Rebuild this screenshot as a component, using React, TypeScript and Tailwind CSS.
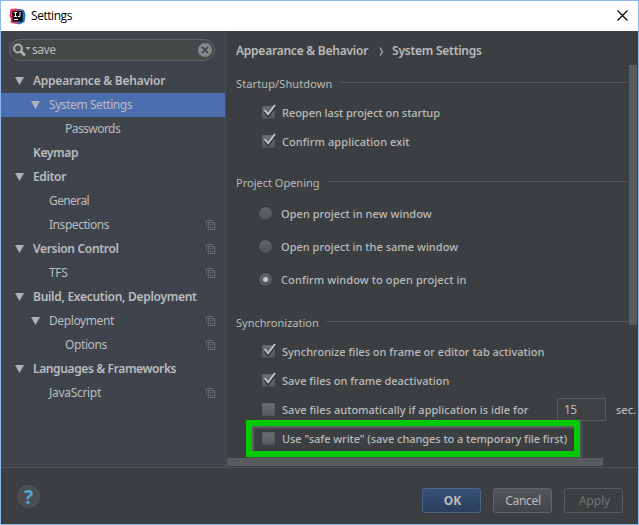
import React from "react";

const NOTO = "font-['Noto_Sans','Open_Sans',sans-serif]";

function CopyIcon() {
  return (
    <svg width="9" height="10" viewBox="0 0 9 10" fill="none" stroke="#646971" shapeRendering="crispEdges">
      <path d="M.5 7V.5H7M2.5 2.5h6v7h-6zM4 4.5h3M4 7.5h3" />
    </svg>
  );
}

type RowProps = { label: string; level: number; bold?: boolean; arrow?: boolean; copy?: boolean; selected?: boolean; tracking?: string };

const indents = ["pl-[14px]", "pl-[30px]", "pl-[46px]"];

const rows: RowProps[] = [
  { label: "Appearance & Behavior", level: 0, bold: true, arrow: true, tracking: "tracking-[-0.24px]" },
  { label: "System Settings", level: 1, arrow: true, selected: true, tracking: "tracking-[-0.43px]" },
  { label: "Passwords", level: 2, tracking: "tracking-[-0.55px]" },
  { label: "Keymap", level: 0, bold: true, tracking: "tracking-[-0.35px]" },
  { label: "Editor", level: 0, bold: true, arrow: true, tracking: "tracking-[-0.35px]" },
  { label: "General", level: 1, tracking: "tracking-[-0.6px]" },
  { label: "Inspections", level: 1, copy: true, tracking: "tracking-[-0.45px]" },
  { label: "Version Control", level: 0, bold: true, arrow: true, copy: true, tracking: "tracking-[-0.32px]" },
  { label: "TFS", level: 1, copy: true, tracking: "tracking-[-0.3px]" },
  { label: "Build, Execution, Deployment", level: 0, bold: true, arrow: true, tracking: "tracking-[-0.28px]" },
  { label: "Deployment", level: 1, arrow: true, copy: true, tracking: "tracking-[-0.4px]" },
  { label: "Options", level: 2, copy: true, tracking: "tracking-[-0.4px]" },
  { label: "Languages & Frameworks", level: 0, bold: true, arrow: true, tracking: "tracking-[-0.37px]" },
  { label: "JavaScript", level: 1, copy: true, tracking: "tracking-[-0.3px]" },
];

function TreeRow({ label, level, bold, arrow, copy, selected, tracking = "" }: RowProps) {
  return (
    <div className={`flex h-6 items-center pr-[10px] ${indents[level]} ${selected ? "bg-[#4b6eaf]" : ""}`}>
      <span className="w-[18px] shrink-0">
        {arrow && (
          <svg width="9" height="8" viewBox="0 0 9 8" fill="#afb1b3"><path d="M0 0h9L4.5 8z" /></svg>
        )}
      </span>
      <span className={`grow whitespace-nowrap text-[12px] text-[#bbbdbf] ${bold ? "font-semibold" : ""} ${tracking}`}>{label}</span>
      {copy && <CopyIcon />}
    </div>
  );
}

function Section({ title, tracking = "" }: { title: string; tracking?: string }) {
  return (
    <div className="flex h-5 items-center pr-[5px]">
      <span className={`whitespace-nowrap text-[11px] text-[#bbbbbb] ${tracking}`}>{title}</span>
      <span className="mb-[3px] ml-[7px] h-px grow bg-[#525456]" />
    </div>
  );
}

function Check({ label, checked, tracking = "" }: { label: string; checked?: boolean; tracking?: string }) {
  return (
    <div className="flex h-[29px] items-center pl-[26px]">
      <svg width="16" height="17" viewBox="0 0 16 17" className="mr-[4px] shrink-0 overflow-visible">
        <defs>
          <linearGradient id="box" x2="0" y2="1"><stop stopColor="#6d6f71" /><stop offset="1" stopColor="#56595b" /></linearGradient>
        </defs>
        <rect x="0" y="2" width="13" height="13" rx="1" fill="url(#box)" stroke="#333537" strokeOpacity=".5" strokeWidth=".6" />
        {checked && (
          <>
            <path d="M3 7.5l3.2 4L13 2.5" fill="none" stroke="#303133" strokeWidth="3" />
            <path d="M2.7 6.2l3.4 4.1L13 1" fill="none" stroke="#c5c6c7" strokeWidth="1.9" />
          </>
        )}
      </svg>
      <span className={`whitespace-nowrap text-[11px] font-medium text-[#bbbbbb] ${tracking}`}>{label}</span>
    </div>
  );
}

function Radio({ label, checked, tracking = "" }: { label: string; checked?: boolean; tracking?: string }) {
  return (
    <div className="flex h-[33px] items-center pl-[23px]">
      <span className="mr-[9px] flex size-[13px] shrink-0 items-center justify-center rounded-full bg-linear-to-b from-[#626466] to-[#525557] shadow-[0_0_0_1px_#37393b]">
        {checked && <span className="size-[5px] rounded-full bg-[#c8c8c8]" />}
      </span>
      <span className={`whitespace-nowrap text-[11px] font-medium text-[#bbbbbb] ${tracking}`}>{label}</span>
    </div>
  );
}

function AppLogo() {
  return (
    <svg width="17" height="17" viewBox="0 0 17 17">
      <path d="M9 1l6 1 1.500 5-1 7-5 2.500L5 15z" fill="#1a74c4" />
      <path d="M1.500 1L7 .5 11 3 6 14l-4.500 1L2 11 .5 8z" fill="#e8325b" />
      <path d="M8 1.500l4-.5 2 3-4 1z" fill="#7656b8" />
      <path d="M1.500 15l3-2 6 1-1.500 2z" fill="#c04585" />
      <rect x="3.500" y="3" width="10" height="10.500" fill="#050505" />
      <path d="M5 4.500h3M6.500 4.500v4M5 8.500h3M11 4v4.500H9M5 11.500h4" fill="none" stroke="#fff" />
    </svg>
  );
}

export default function App() {
  return (
    <div className={`relative flex h-[525px] w-[639px] flex-col overflow-hidden border border-[#8cb9e8] bg-[#3c3f41] leading-4 ${NOTO}`}>
      <header className="flex h-[30px] shrink-0 items-center bg-white pl-2 pr-[10px]">
        <AppLogo />
        <span className="ml-[5px] grow font-['Open_Sans','Noto_Sans',sans-serif] text-[12px] tracking-[-0.45px] text-black">Settings</span>
        <svg className="mb-[2px]" width="11" height="11" viewBox="0 0 11 11" stroke="#000" strokeWidth="1.1"><path d="M.5.5l10 10M10.500.5l-10 10" /></svg>
      </header>

      <div className="flex h-[436px] shrink-0">
        <aside className="w-[225px] shrink-0 border-r border-[#4b4d50] bg-[#3e434c]">
          <div className="mb-[8px] ml-2 mt-[8px] flex h-[22px] w-[206px] items-center rounded-full border border-[#606366] bg-[#45494a] pl-[3px] pr-[2px]">
            <svg width="18" height="14" viewBox="0 0 18 14" fill="none" stroke="#afb1b3">
              <circle cx="5" cy="5.500" r="3.900" strokeWidth="2" />
              <path d="M8 8.500l4 4" strokeWidth="2.600" />
              <path d="M12.500 4h5L15 7z" fill="#afb1b3" stroke="none" />
            </svg>
            <span className="ml-px grow text-[12px] tracking-[-0.45px] text-[#bbbbbb]">save</span>
            <svg width="14" height="14" viewBox="0 0 14 14"><circle cx="7" cy="7" r="7" fill="#85888a" /><path d="M4 4l6 6M10 4l-6 6" stroke="#3f4244" strokeWidth="1.700" /></svg>
          </div>
          {rows.map((row) => <TreeRow key={row.label} {...row} />)}
        </aside>

        <main className="relative min-w-0 grow pl-[10px]">
          <div className="mt-[10px] flex h-5 items-center whitespace-nowrap text-[12px] font-semibold text-[#bbbbbb]">
            <span className="tracking-[-0.24px]">Appearance &amp; Behavior</span>
            <svg className="ml-[11px] mr-[8px]" width="5" height="9" viewBox="0 0 5 9" fill="none" stroke="#bbb" strokeWidth="1.100"><path d="M1 .5L3.500 4.500 1 8.500" /></svg>
            <span className="tracking-[-0.26px]">System Settings</span>
          </div>
          <div className="mt-[13px]"><Section title="Startup/Shutdown" tracking="tracking-[0.11px]" /></div>
          <div className="mt-[4px]">
            <Check label="Reopen last project on startup" checked tracking="tracking-[-0.04px]" />
            <Check label="Confirm application exit" checked tracking="tracking-[0.07px]" />
          </div>
          <div className="mt-[17px]"><Section title="Project Opening" /></div>
          <div className="mt-[4px]">
            <Radio label="Open project in new window" tracking="tracking-[0.04px]" />
            <Radio label="Open project in the same window" tracking="tracking-[0.02px]" />
            <Radio label="Confirm window to open project in" checked tracking="tracking-[0.1px]" />
          </div>
          <div className="mt-[17px]"><Section title="Synchronization" /></div>
          <div className="mt-[4px]">
            <Check label="Synchronize files on frame or editor tab activation" checked />
            <Check label="Save files on frame deactivation" checked />
            <div className="flex h-[29px] items-center">
              <div className="w-[321px] shrink-0"><Check label="Save files automatically if application is idle for" tracking="tracking-[0.02px]" /></div>
              <span className="flex h-[23px] w-[49px] shrink-0 items-center border border-[#5a5d5f] bg-[#3e4143] pl-[6px] text-[12px] tracking-[-0.6px] text-[#bbbbbb]">15</span>
              <span className="ml-[10px] text-[11px] font-medium text-[#bbbbbb]">sec.</span>
            </div>
            <Check label={'Use "safe write" (save changes to a temporary file first)'} tracking="tracking-[-0.055px]" />
          </div>
          <div className="absolute left-[20px] top-[389px] h-[37px] w-[334px] border-[6px] border-[#00cb00] shadow-[2px_1px_2px_#55585a,inset_2px_2px_2px_#626466]" />
          <div className="absolute left-px top-[427px] h-[8px] w-[376px] bg-[#595b5d]" />
          <div className="absolute right-px top-[34px] h-[260px] w-[8px] bg-[#595b5d]" />
        </main>
      </div>

      <footer className="flex grow items-start border-t border-[#515355] pl-[16px] pr-[15px]">
        <span className="mt-[17px] flex size-[23px] items-center justify-center rounded-full border border-[#54585a] bg-[#4a4e50] text-[19px] font-bold text-[#54a9d3]">?</span>
        <div className="ml-auto mt-[20px] flex gap-3 text-[12px] text-[#bbbbbb]">
          <button className="h-[25px] w-[59px] rounded-[3px] border border-[#4d6585] bg-linear-to-b from-[#365176] to-[#2b3f5e] pl-[2px] font-bold">OK</button>
          <button className="h-[25px] w-[59px] rounded-[3px] border border-[#626668] bg-linear-to-b from-[#515658] to-[#424648] pl-px tracking-[-0.3px]">Cancel</button>
          <button className="h-[25px] w-[59px] rounded-[3px] border border-[#585b5d] pl-[2px] tracking-[-0.1px] text-[#717476]">Apply</button>
        </div>
      </footer>
    </div>
  );
}
